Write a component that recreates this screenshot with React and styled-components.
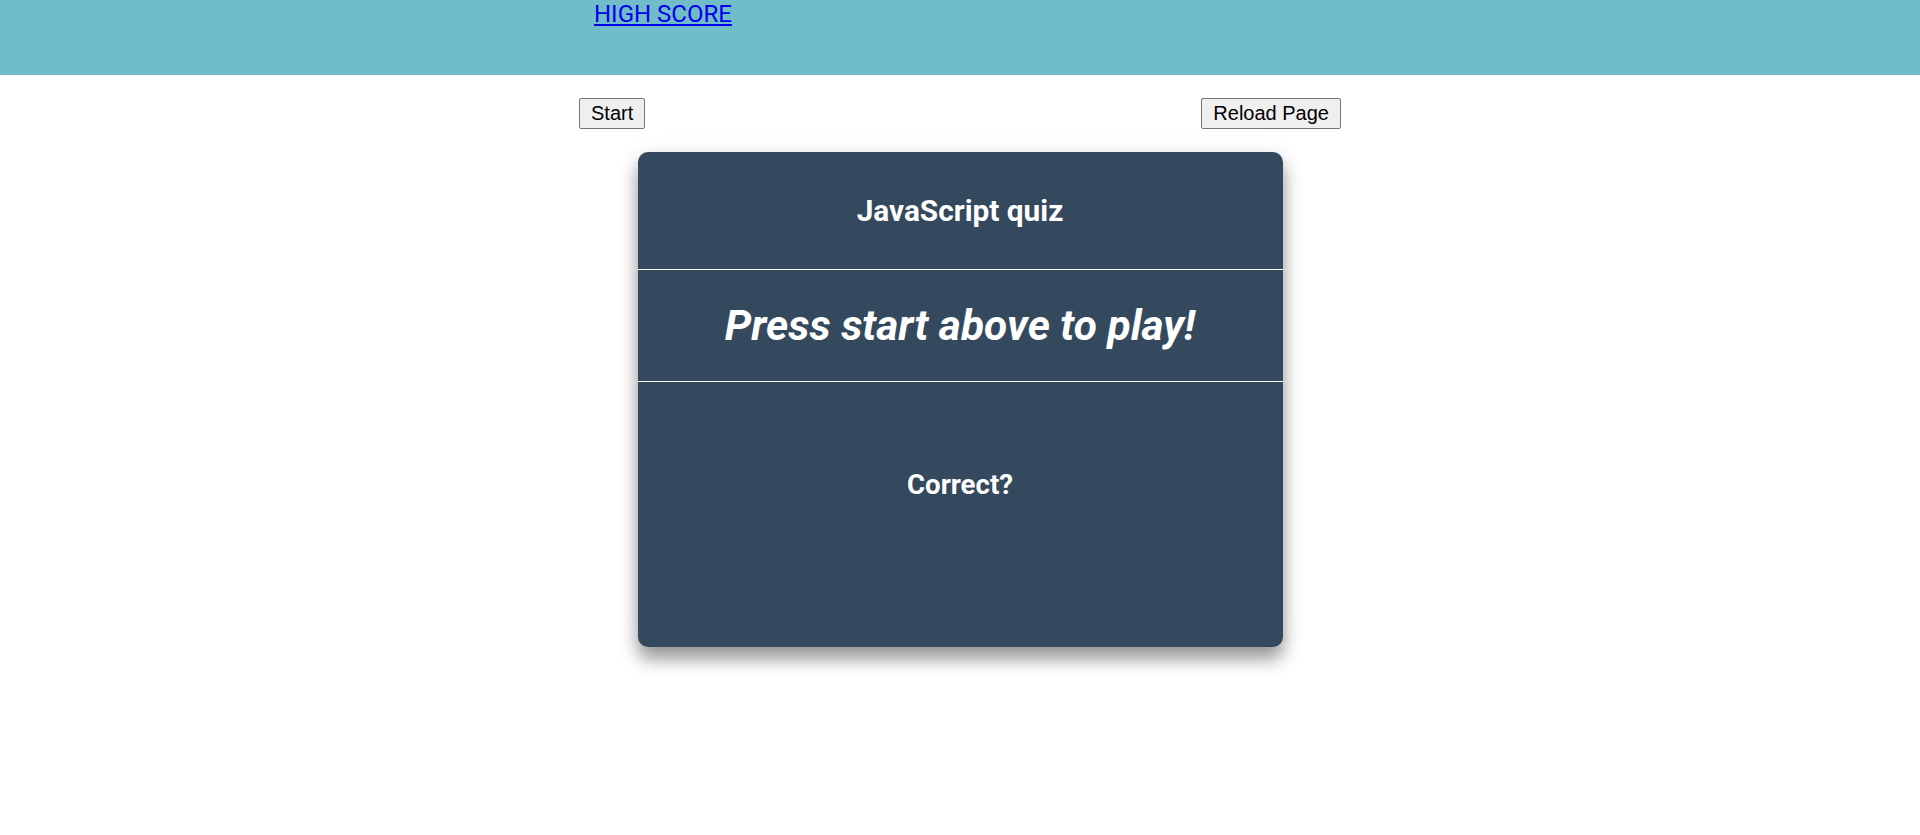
import React from 'react'
import styled, { createGlobalStyle } from 'styled-components'

const GlobalStyle = createGlobalStyle`
    body {
        margin: 0;
        background: #fff;
        font-family: Roboto, "Liberation Sans", sans-serif;
    }
`

function App() {
    return (
        <Page>
            <GlobalStyle />
            <Header>
                <HeaderInner>
                    <ScoreLink href="#">HIGH SCORE</ScoreLink>
                </HeaderInner>
            </Header>

            <Controls>
                <Button>Start</Button>
                <Button>Reload Page</Button>
            </Controls>

            <Card>
                <Section height={117} divider>
                    <Title size={29.8}>JavaScript quiz</Title>
                </Section>
                <Section height={111} divider>
                    <Question>Press start above to play!</Question>
                </Section>
                <Answer>
                    <Title size={27.6}>Correct?</Title>
                </Answer>
            </Card>
        </Page>
    )
}

const Page = styled.div`
    min-height: 100vh;
    padding-bottom: 40px;
    box-sizing: border-box;
`

const Header = styled.header`
    height: 75px;
    background: #71bcc9;
`

const HeaderInner = styled.div`
    width: 762px;
    margin: 0 auto;
    padding-left: 15px;
    box-sizing: border-box;
`

const ScoreLink = styled.a`
    font-family: Roboto, sans-serif;
    font-size: 24px;
    line-height: 28px;
    color: #0000ee;
    text-decoration: underline;
`

const Controls = styled.div`
    width: 762px;
    margin: 23px auto 0;
    display: flex;
    justify-content: space-between;
`

const Button = styled.button`
    font-family: "Liberation Sans", Arial, sans-serif;
    font-size: 20px;
    line-height: 23px;
    padding: 3px 11px;
    color: #000;
    background: #efefef;
    border: 1px solid #767676;
    border-radius: 2px;
    cursor: pointer;

    &:hover {
        background: #e5e5e5;
    }
`

const Card = styled.div`
    width: 645px;
    margin: 23px auto 0;
    background: #34495e;
    border-radius: 10px;
    overflow: hidden;
    color: #fff;
    box-shadow: 0 12px 18px rgba(0, 0, 0, 0.4), 0 0 24px rgba(0, 0, 0, 0.06);
`

const Section = styled.div`
    height: ${p => p.height}px;
    display: flex;
    align-items: center;
    justify-content: center;
    border-bottom: ${p => (p.divider ? '1px solid #fff' : 'none')};
`

const Answer = styled.div`
    height: 265px;
    padding-top: 86px;
    box-sizing: border-box;
    display: flex;
    justify-content: center;
`

const Title = styled.h2`
    margin: 0;
    font-size: ${p => p.size}px;
    line-height: 33px;
    font-weight: 700;
`

const Question = styled.p`
    margin: 0;
    font-size: 42.5px;
    line-height: 48px;
    font-weight: 700;
    font-style: italic;
`

export default App
